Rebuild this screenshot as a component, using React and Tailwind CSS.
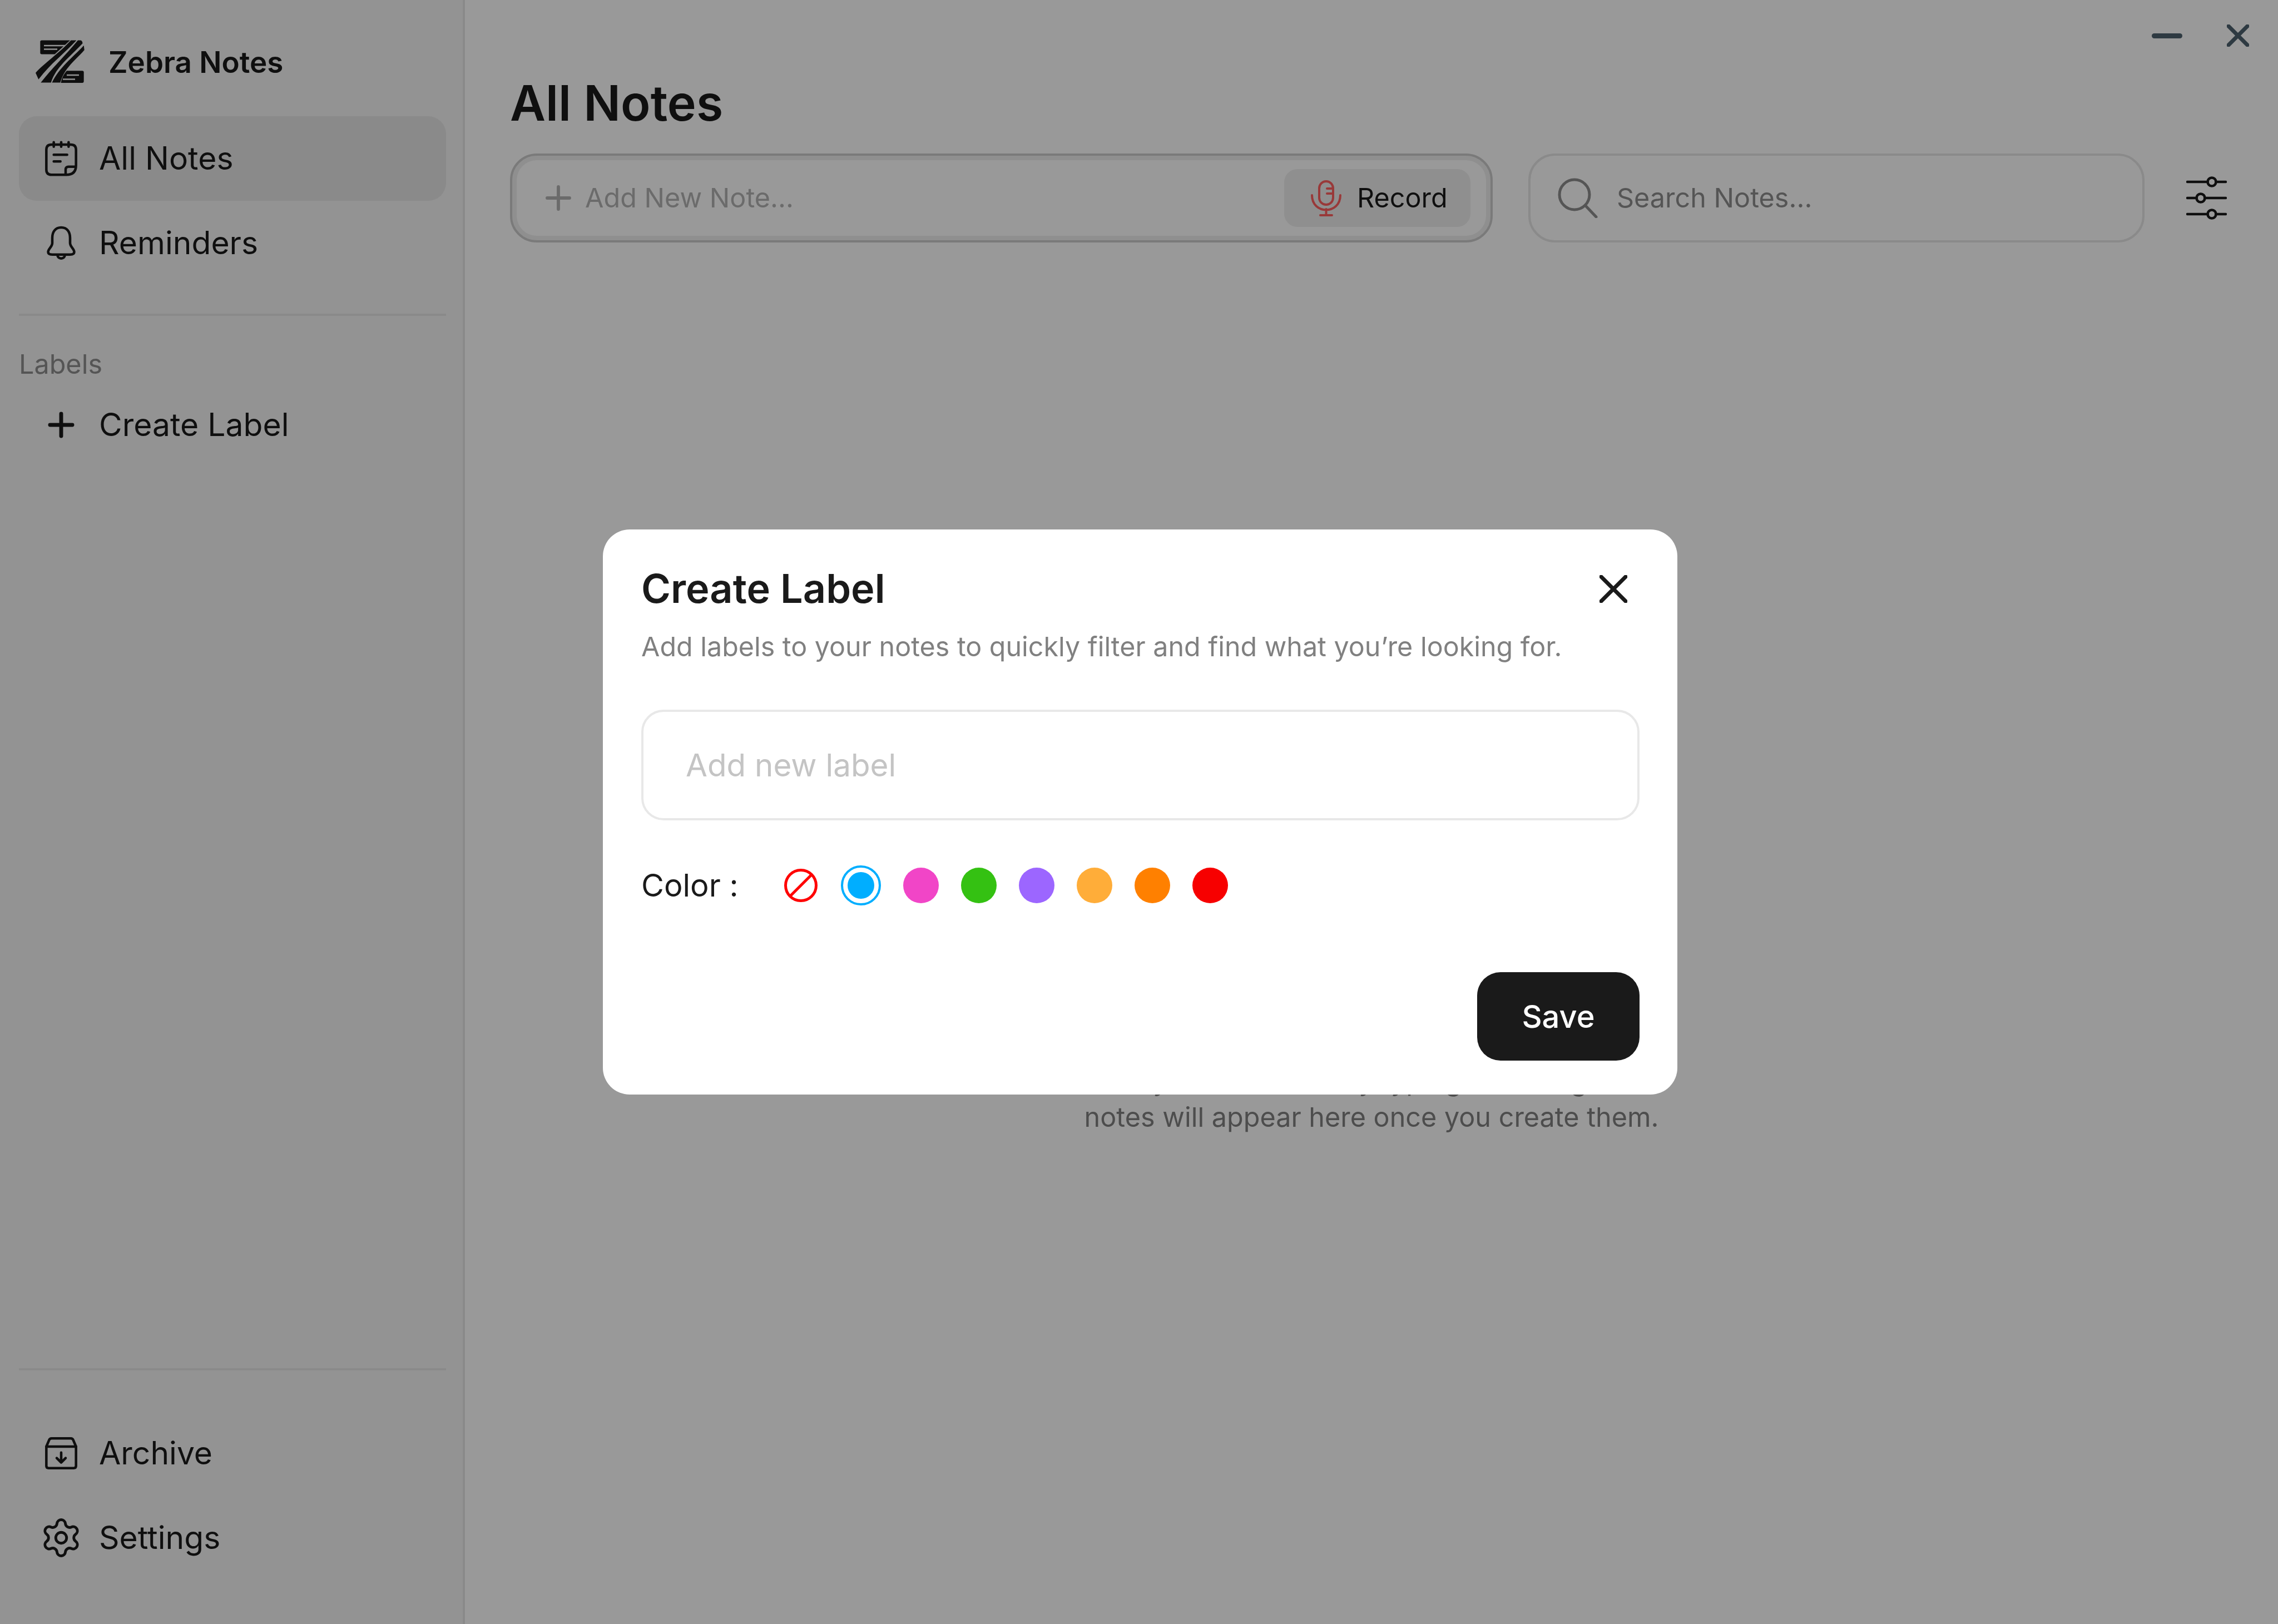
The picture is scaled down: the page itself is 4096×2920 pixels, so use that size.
import React from 'react';
import { Settings } from 'lucide-react';

const FONT = 'font-["Inter","Noto_Sans",sans-serif]';

const ZebraLogo = () => (
    <svg width="88" height="78" viewBox="0 0 88 78" className="shrink-0">
        <path fill="#1a1a1a" d="M11 0.5 H62 L34.5 25.5 H11 Q8.3 25.5 8.3 22.8 V3.2 Q8.3 0.5 11 0.5 Z" />
        <path fill="#1a1a1a" d="M63.5 0.5 H73.5 C52 24 27 42 5.3 70.7 L0 59 C15 42 42 24 63.5 0.5 Z" />
        <path fill="#1a1a1a" d="M76 0.5 H81 Q84 1 84.5 6 C60 32 37 48 27.7 76.5 H9.3 C30 50 55 26 76 0.5 Z" />
        <path fill="#1a1a1a" d="M86.7 9.7 L87.7 18 C70 38 52 50 44.3 76.5 H29.5 C42 50 66 32 86.7 9.7 Z" />
        <path fill="#1a1a1a" d="M56 55.3 H84 Q86.7 55.3 86.7 58 V74 Q86.7 77 84 77 H45.5 C47 68 51 61 56 55.3 Z" />
        <path stroke="#f5f5f5" strokeWidth="2.4" d="M15 10 H53 M15 16.5 H39 M56 63 H78 M49 70.5 H71" />
    </svg>
);

const NotesIcon = () => (
    <svg width="64" height="64" viewBox="0 0 24 24" fill="none" stroke="#1a1a1a" strokeWidth="1.7" strokeLinecap="round" strokeLinejoin="round" className="shrink-0">
        <path d="M5.5 2.6 H18.5 Q22 2.6 22 6 V16.5 Q22 23 15.5 23 H5.5 Q2 23 2 19.5 V6 Q2 2.6 5.5 2.6 Z" />
        <path d="M7 1 V4 M12 1 V4 M17 1 V4 M7 9.5 H16 M7 14 H11.5" />
        <path d="M15 22.6 V19.5 Q15 17.5 17 17.5 H21.6" />
    </svg>
);

const BellIcon = () => (
    <svg width="64" height="64" viewBox="0 0 24 24" fill="none" stroke="#1a1a1a" strokeWidth="1.7" strokeLinecap="round" strokeLinejoin="round" className="shrink-0">
        <path d="M12 1.5 C8 1.5 6 4.5 6 8.5 V12 C6 14.5 3.2 16 3.2 18 C3.2 19.2 4.2 19.8 6 19.8 H18 C19.8 19.8 20.8 19.2 20.8 18 C20.8 16 18 14.5 18 12 V8.5 C18 4.5 16 1.5 12 1.5 Z" />
        <path d="M9.5 20 C9.5 23.2 14.5 23.2 14.5 20" />
    </svg>
);

const PlusIcon = ({ size = 64, color = '#1a1a1a', width = 2.6 }) => (
    <svg width={size} height={size} viewBox="0 0 24 24" fill="none" stroke={color} strokeWidth={width} strokeLinecap="round" className="shrink-0">
        <path d="M12 4.5 V19.5 M4.5 12 H19.5" />
    </svg>
);

const ArchiveIcon = () => (
    <svg width="64" height="64" viewBox="0 0 24 24" fill="none" stroke="#1a1a1a" strokeWidth="1.7" strokeLinecap="round" strokeLinejoin="round" className="shrink-0">
        <path d="M2 7.5 L3.8 3.2 Q4.2 2 5.6 2 H18.4 Q19.8 2 20.2 3.2 L22 7.5 V20.5 Q22 22 20.5 22 H3.5 Q2 22 2 20.5 Z" />
        <path d="M2 7.5 H22 M12 11.5 V18 M9 15.2 L12 18.2 L15 15.2" />
    </svg>
);

const MicIcon = () => (
    <svg width="55" height="65" viewBox="0 0 55 65" fill="none" stroke="#ff6060" strokeWidth="4" strokeLinecap="round" className="shrink-0">
        <rect x="15" y="2" width="25" height="42" rx="12.5" />
        <path d="M29 15 H39 M29 24 H39 M2 27 C2 62 53 62 53 27 M27.5 52 V63 M17 63 H38" />
    </svg>
);

const SearchIcon = () => (
    <svg width="72" height="72" viewBox="0 0 72 72" fill="none" stroke="#8e8e8e" strokeWidth="5" strokeLinecap="round" className="shrink-0">
        <circle cx="30" cy="30" r="27" />
        <path d="M50 50 L69 70" />
    </svg>
);

const FilterIcon = () => (
    <svg width="73" height="80" viewBox="0 0 73 80" fill="none" stroke="#1a1a1a" strokeWidth="4.5" strokeLinecap="round" className="shrink-0">
        <path d="M2 11 H39 M53 11 H71 M2 40 H19 M33 40 H71 M2 69 H39 M53 69 H71" />
        <circle cx="46" cy="11" r="7.5" />
        <circle cx="26" cy="40" r="7.5" />
        <circle cx="46" cy="69" r="7.5" />
    </svg>
);

const NavItem = ({ icon, label, active }) => (
    <div className={`flex items-center gap-[36px] h-[152px] pl-[44px] rounded-[32px] text-[57px] text-[#1a1a1a] ${active ? 'bg-[#e6e6e6]' : ''}`}>
        {icon}
        <span>{label}</span>
    </div>
);

const swatches = ['#f145c7', '#34c112', '#9c66ff', '#ffad39', '#ff8000', '#f70000'];

const App = () => {
    return (
        <div className={`relative flex w-full h-[2920px] overflow-hidden bg-white ${FONT}`}>
            {/* Sidebar */}
            <aside className="w-[836px] shrink-0 h-full flex flex-col bg-[#f5f5f5] border-r-4 border-[#e6e6e6] pl-[34px] pr-[30px]">
                <div className="flex items-center gap-[43px] h-[209px] pl-[30px] pt-[13px]">
                    <ZebraLogo />
                    <span className="text-[53px] font-semibold text-[#1a1a1a] mt-[3px]">Zebra Notes</span>
                </div>
                <NavItem active icon={<NotesIcon />} label="All Notes" />
                <NavItem icon={<BellIcon />} label="Reminders" />
                <div className="h-[4px] bg-[#e6e6e6] mt-[51px]" />
                <div className="h-[64px] mt-[55px] flex items-center text-[48.5px] text-[#8e8e8e]">Labels</div>
                <div className="mt-[1px]">
                    <NavItem icon={<PlusIcon />} label="Create Label" />
                </div>
                <div className="mt-auto h-[4px] bg-[#e6e6e6]" />
                <div className="mt-[73px] pb-[79px]">
                    <NavItem icon={<ArchiveIcon />} label="Archive" />
                    <NavItem icon={<Settings size={78} strokeWidth={1.5} color="#1a1a1a" className="shrink-0 -mx-[7px]" />} label="Settings" />
                </div>
            </aside>

            {/* Main */}
            <main className="flex-1 h-full flex flex-col">
                <div className="pl-[81px] pr-[92px] pt-[44px]">
                    <div className="flex justify-end items-center gap-[80px] h-[40px] -mr-[40px]">
                        <div className="w-[55px] h-[9px] rounded-full bg-[#4e616e]" />
                        <svg width="40" height="40" viewBox="0 0 40 40" fill="none" stroke="#4e616e" strokeWidth="7" strokeLinecap="round">
                            <path d="M3 3 L37 37 M37 3 L3 37" />
                        </svg>
                    </div>
                    <h1 className="mt-[49px] text-[88px] leading-[104px] font-semibold text-[#1a1a1a]">All Notes</h1>
                    <div className="mt-[39px] flex items-center">
                        <div className="w-[1767px] h-[160px] shrink-0 flex items-center rounded-[48px] border-4 border-[#cccccc] ring-inset ring-[8px] ring-[#eeeeee] pl-[51px] pr-[36px]">
                            <PlusIcon size={64} color="#b3b3b3" width={2.2} />
                            <span className="ml-[16px] text-[48.5px] text-[#b3b3b3]">Add New Note...</span>
                            <div className="ml-auto flex items-center gap-[28px] w-[335px] h-[104px] pl-[48px] rounded-[24px] bg-[#eeeeee]">
                                <MicIcon />
                                <span className="text-[48.5px] text-[#1a1a1a]">Record</span>
                            </div>
                        </div>
                        <div className="ml-[64px] w-[1108px] h-[160px] shrink-0 flex items-center gap-[34px] rounded-[48px] border-4 border-[#e6e6e6] pl-[49px]">
                            <SearchIcon />
                            <span className="text-[48.5px] text-[#8e8e8e]">Search Notes...</span>
                        </div>
                        <div className="ml-[75px]">
                            <FilterIcon />
                        </div>
                    </div>
                </div>
                {/* Empty state, mostly covered by the dialog */}
                <div className="mt-[1475px] text-center text-[48.5px] leading-[65px] text-[#808080]">
                    <p>Add your own note by typing in the big box.</p>
                    <p>notes will appear here once you create them.</p>
                </div>
            </main>

            {/* Dialog */}
            <div className="absolute inset-0 bg-black/40 flex items-center justify-center">
                <div className="w-[1932px] h-[1016px] ml-[4px] bg-white rounded-[48px] pl-[69px] pr-[68px] pt-[66px] flex flex-col">
                    <div className="flex items-center justify-between h-[80px]">
                        <h2 className="text-[72px] font-semibold text-[#1a1a1a]">Create Label</h2>
                        <svg width="50" height="50" viewBox="0 0 50 50" fill="none" stroke="#1a1a1a" strokeWidth="7" strokeLinecap="round" className="mr-[22px] mt-[2px]">
                            <path d="M3 3 L47 47 M47 3 L3 47" />
                        </svg>
                    </div>
                    <p className="mt-[33px] text-[48.4px] leading-[64px] text-[#808080]">Add labels to your notes to quickly filter and find what you’re looking for.</p>
                    <div className="mt-[81px] h-[199px] rounded-[40px] border-4 border-[#e8e8e8] pl-[76px] pt-[2px] flex items-center text-[56.5px] text-[#c4c4c4]">Add new label</div>
                    <div className="mt-[81px] h-[72px] flex items-center">
                        <span className="text-[56px] text-[#1a1a1a]">Color :</span>
                        <div className="ml-[80px] flex items-center gap-[40px]">
                            <svg width="64" height="64" viewBox="0 0 64 64" fill="none" stroke="#ff0000" strokeWidth="5">
                                <circle cx="32" cy="32" r="27.5" />
                                <path d="M13 51 L51 13" />
                            </svg>
                            <div className="w-[72px] h-[72px] rounded-full border-4 border-[#00aeff] flex items-center justify-center">
                                <div className="w-[48px] h-[48px] rounded-full bg-[#00aeff]" />
                            </div>
                            {swatches.map((c) => (
                                <div key={c} className="w-[64px] h-[64px] rounded-full" style={{ backgroundColor: c }} />
                            ))}
                        </div>
                    </div>
                    <div className="mt-[120px] flex justify-end">
                        <div className="w-[292px] h-[159px] rounded-[42px] bg-[#1a1a1a] text-white text-[56px] font-medium flex items-center justify-center">Save</div>
                    </div>
                </div>
            </div>
        </div>
    );
};

export default App;
